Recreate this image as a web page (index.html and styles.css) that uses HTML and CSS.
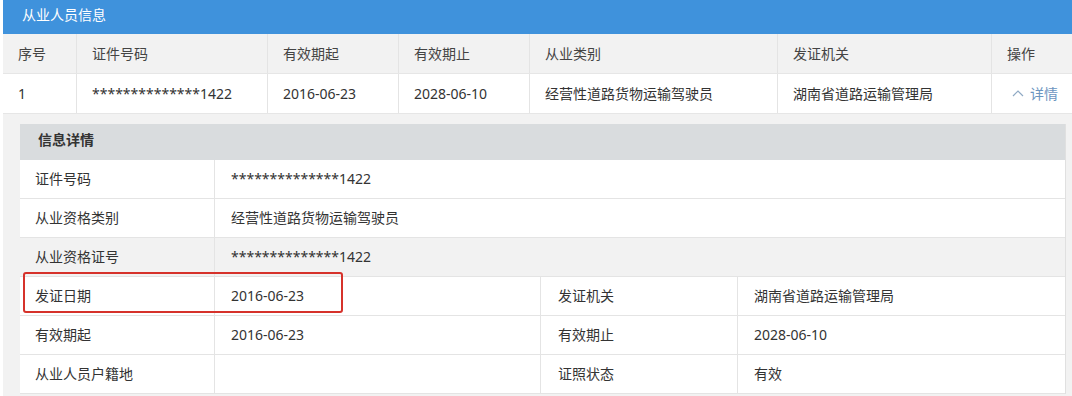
FILE: index.html
```html
<!DOCTYPE html>
<html lang="zh-CN">
<head>
<meta charset="utf-8">
<link rel="stylesheet" href="styles.css">
</head>
<body>
<div class="wrap">
  <div class="title">从业人员信息</div>
  <div class="grid-table">
    <div class="row head">
      <div class="c">序号</div>
      <div class="c">证件号码</div>
      <div class="c">有效期起</div>
      <div class="c">有效期止</div>
      <div class="c">从业类别</div>
      <div class="c">发证机关</div>
      <div class="c">操作</div>
    </div>
    <div class="row body">
      <div class="c">1</div>
      <div class="c">**************1422</div>
      <div class="c">2016-06-23</div>
      <div class="c">2028-06-10</div>
      <div class="c">经营性道路货物运输驾驶员</div>
      <div class="c">湖南省道路运输管理局</div>
      <div class="c op"><svg class="chev" width="12" height="8" viewBox="0 0 12 8"><path d="M1 7 L6 2 L11 7" fill="none" stroke="#8fa9c4" stroke-width="1.2"/></svg><span>详情</span></div>
    </div>
  </div>
  <div class="detail-area">
    <div class="panel">
      <div class="panel-head">信息详情</div>
      <div class="drow">
        <div class="d lab">证件号码</div>
        <div class="d val span3">**************1422</div>
      </div>
      <div class="drow">
        <div class="d lab">从业资格类别</div>
        <div class="d val span3">经营性道路货物运输驾驶员</div>
      </div>
      <div class="drow gray">
        <div class="d lab">从业资格证号</div>
        <div class="d val span3">**************1422</div>
      </div>
      <div class="drow">
        <div class="d lab">发证日期</div>
        <div class="d val">2016-06-23</div>
        <div class="d lab2">发证机关</div>
        <div class="d val2">湖南省道路运输管理局</div>
        <div class="mark"></div>
      </div>
      <div class="drow">
        <div class="d lab">有效期起</div>
        <div class="d val">2016-06-23</div>
        <div class="d lab2">有效期止</div>
        <div class="d val2">2028-06-10</div>
      </div>
      <div class="drow">
        <div class="d lab">从业人员户籍地</div>
        <div class="d val"></div>
        <div class="d lab2">证照状态</div>
        <div class="d val2">有效</div>
      </div>
    </div>
  </div>
</div>
</body>
</html>
```
FILE: styles.css
```css
* { box-sizing: border-box; }
html, body { margin: 0; padding: 0; background: #fff; }
body {
  font-family: "Noto Sans", "Noto Sans CJK SC", sans-serif;
  font-size: 14px;
  color: #333;
  width: 1072px;
  height: 396px;
  overflow: hidden;
}
.wrap { padding-left: 3px; }
.title {
  height: 34px;
  background: #3f92dc;
  color: #fff;
  padding-left: 19px;
  line-height: 30px;
  font-size: 14px;
}
.row {
  display: grid;
  grid-template-columns: 74px 191px 131px 131px 248px 214px 1fr;
  height: 40px;
  border-bottom: 1px solid #e6e6e6;
}
.row.head { background: #f2f2f2; }
.row.body { background: #fff; }
.row .c {
  padding-left: 15px;
  line-height: 39px;
  border-right: 1px solid #e4e4e4;
  white-space: nowrap;
}
.row .c:last-child { border-right: none; }
.row.head .c { color: #444; }
.op { display: flex; align-items: center; gap: 6px; color: #6c95bf; padding-left: 20px !important; }
.chev { margin-top: -2px; }
.detail-area {
  background: #f2f2f2;
  padding: 10px 6px 3px 17px;
}
.panel { background: #fff; border-right: 1px solid #e0e0e0; }
.panel-head {
  height: 36px;
  background: #d9dcde;
  font-weight: bold;
  color: #333;
  padding-left: 18px;
  line-height: 32px;
}
.drow {
  position: relative;
  display: grid;
  grid-template-columns: 195px 326px 197px 1fr;
  height: 39px;
  border-bottom: 1px solid #e4e4e4;
}
.drow.gray { background: #f2f2f2; }
.d {
  line-height: 38px;
  white-space: nowrap;
  border-right: 1px solid #e4e4e4;
}
.d:last-of-type { border-right: none; }
.lab { padding-left: 15px; }
.val { padding-left: 16px; }
.lab2 { padding-left: 17px; }
.val2 { padding-left: 16px; border-right: none; }
.span3 { grid-column: 2 / 5; border-right: none; }
.mark {
  position: absolute;
  left: 3px;
  top: -5px;
  width: 320px;
  height: 41px;
  border: 2px solid #d6322b;
  border-radius: 3px;
  pointer-events: none;
}
```
